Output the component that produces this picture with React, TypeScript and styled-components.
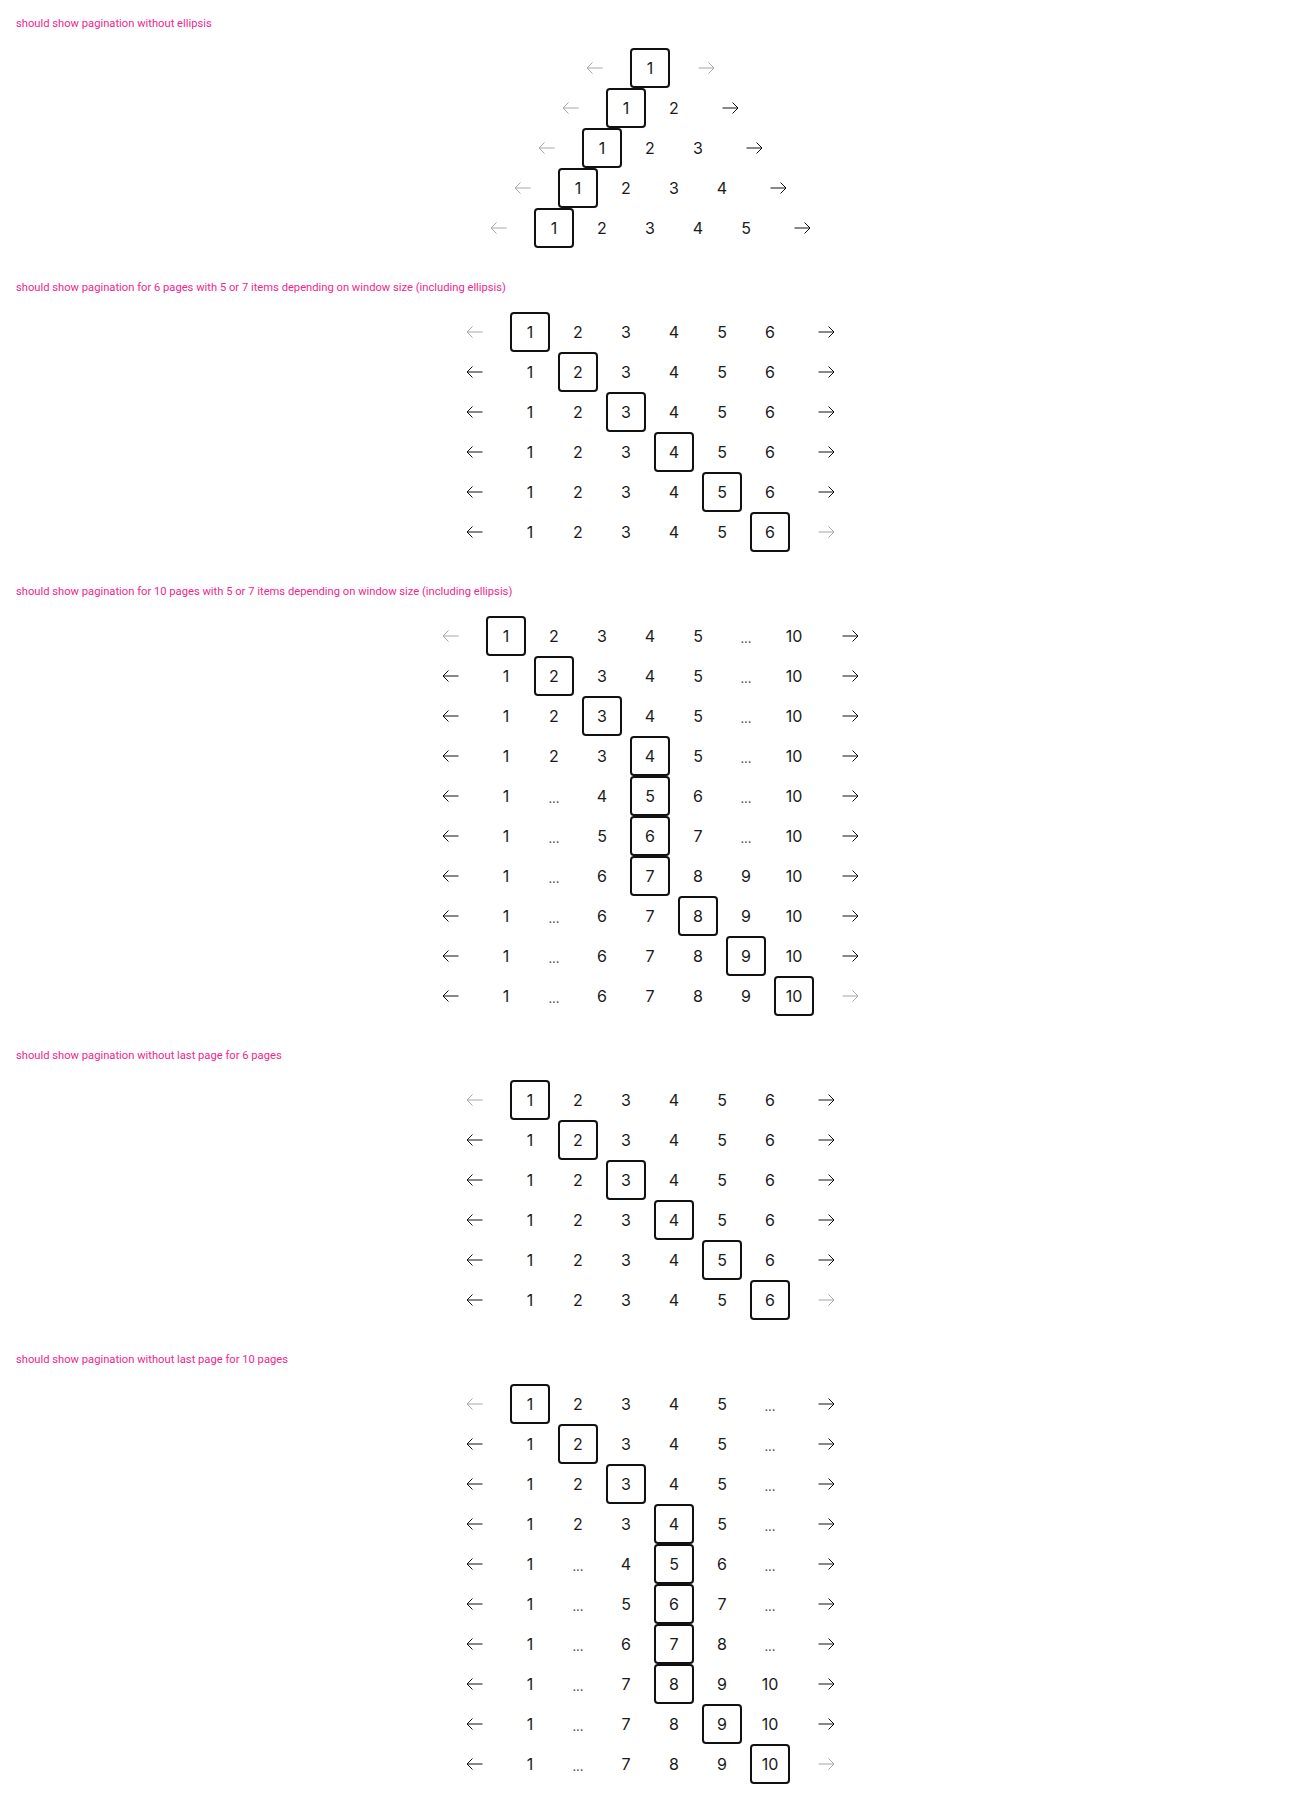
import React from 'react';
import styled, { createGlobalStyle } from 'styled-components';

const GlobalStyle = createGlobalStyle`
  html, body {
    margin: 0;
    padding: 0;
    background: #ffffff;
  }
  body {
    font-family: Inter, "Noto Sans", sans-serif;
  }
`;

const Page = styled.div`
  padding: 16px;
  display: flex;
  flex-direction: column;
  gap: 32px;
`;

const Section = styled.section`
  display: flex;
  flex-direction: column;
`;

const Heading = styled.div`
  font-family: Roboto, "Liberation Sans", sans-serif;
  font-size: 11.2px;
  line-height: 16px;
  color: #f0268f;
  margin-bottom: 16px;
`;

const Rows = styled.div`
  display: flex;
  flex-direction: column;
  align-items: center;
`;

const Row = styled.nav`
  display: flex;
  align-items: center;
  height: 40px;
`;

const Items = styled.div`
  display: flex;
  gap: 8px;
  margin: 0 16px;
`;

const Item = styled.div<{ $active?: boolean }>`
  width: 40px;
  height: 40px;
  box-sizing: border-box;
  display: flex;
  align-items: center;
  justify-content: center;
  font-size: 16px;
  color: #1a1a1a;
  border: 2px solid ${p => (p.$active ? '#111' : 'transparent')};
  border-radius: 4px;
`;

const Dots = styled(Item)`
  font-size: 13px;
  color: #555;
  padding-top: 4px;
`;

const ArrowButton = styled.div<{ $disabled?: boolean }>`
  width: 40px;
  height: 40px;
  display: flex;
  align-items: center;
  justify-content: center;
  color: ${p => (p.$disabled ? '#a6a6a6' : '#111')};
`;

const Arrow = ({ dir }: { dir: 'left' | 'right' }) => (
  <svg
    width="17"
    height="12"
    viewBox="0 0 17 12"
    fill="none"
    stroke="currentColor"
    strokeWidth="1"
    style={{ transform: dir === 'right' ? 'scaleX(-1)' : undefined }}
  >
    <path d="M16.5 6H1 M6.5 0.5L1 6l5.5 5.5" />
  </svg>
);

type Entry = number | '...';

interface PaginationProps {
  items: Entry[];
  current: number;
  total: number;
}

const Pagination: React.FC<PaginationProps> = ({ items, current, total }) => (
  <Row>
    <ArrowButton $disabled={current === 1}>
      <Arrow dir="left" />
    </ArrowButton>
    <Items>
      {items.map((it, i) =>
        it === '...' ? (
          <Dots key={i}>...</Dots>
        ) : (
          <Item key={i} $active={it === current}>
            {it}
          </Item>
        )
      )}
    </Items>
    <ArrowButton $disabled={current === total}>
      <Arrow dir="right" />
    </ArrowButton>
  </Row>
);

const range = (a: number, b: number) => Array.from({ length: b - a + 1 }, (_, i) => a + i);

// 7 items, with last page
const withLast = (total: number, c: number): Entry[] => {
  if (total <= 7) return range(1, total);
  if (c <= 4) return [...range(1, 5), '...', total];
  if (c >= total - 3) return [1, '...', ...range(total - 4, total)];
  return [1, '...', c - 1, c, c + 1, '...', total];
};

// 6 items, no last page
const withoutLast = (total: number, c: number): Entry[] => {
  if (total <= 6) return range(1, total);
  if (c <= 4) return [...range(1, 5), '...'];
  if (c >= total - 2) return [1, '...', ...range(total - 3, total)];
  return [1, '...', c - 1, c, c + 1, '...'];
};

const sections: { title: string; rows: PaginationProps[] }[] = [
  {
    title: 'should show pagination without ellipsis',
    rows: range(1, 5).map(t => ({ items: range(1, t), current: 1, total: t })),
  },
  {
    title: 'should show pagination for 6 pages with 5 or 7 items depending on window size (including ellipsis)',
    rows: range(1, 6).map(c => ({ items: withLast(6, c), current: c, total: 6 })),
  },
  {
    title: 'should show pagination for 10 pages with 5 or 7 items depending on window size (including ellipsis)',
    rows: range(1, 10).map(c => ({ items: withLast(10, c), current: c, total: 10 })),
  },
  {
    title: 'should show pagination without last page for 6 pages',
    rows: range(1, 6).map(c => ({ items: withoutLast(6, c), current: c, total: 6 })),
  },
  {
    title: 'should show pagination without last page for 10 pages',
    rows: range(1, 10).map(c => ({ items: withoutLast(10, c), current: c, total: 10 })),
  },
];

const App: React.FC = () => (
  <>
    <GlobalStyle />
    <Page>
      {sections.map(s => (
        <Section key={s.title}>
          <Heading>{s.title}</Heading>
          <Rows>
            {s.rows.map((r, i) => (
              <Pagination key={i} {...r} />
            ))}
          </Rows>
        </Section>
      ))}
    </Page>
  </>
);

export default App;
